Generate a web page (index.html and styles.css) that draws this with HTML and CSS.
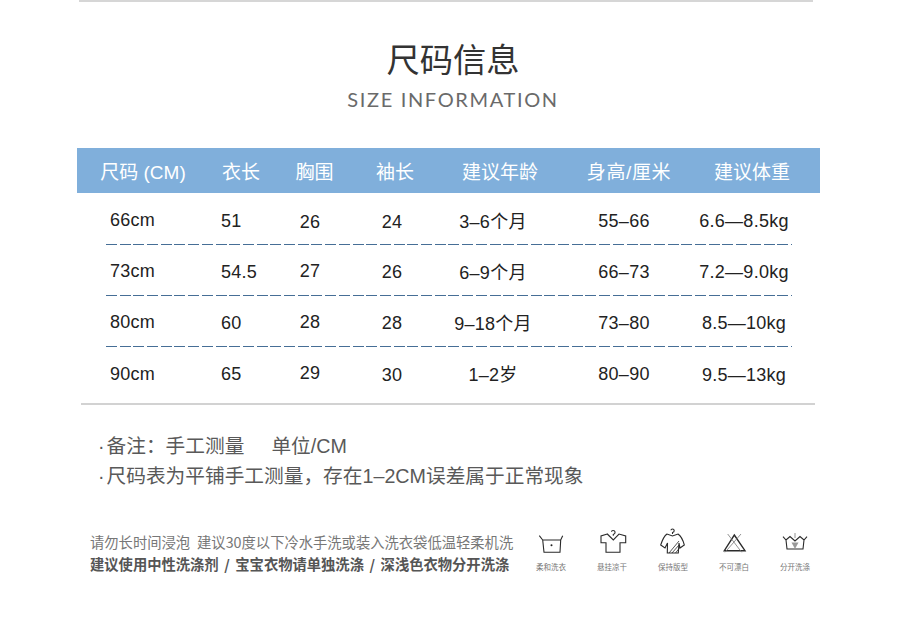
FILE: index.html
```html
<!DOCTYPE html>
<html lang="zh">
<head>
<meta charset="utf-8">
<title>尺码信息</title>
<link rel="stylesheet" href="styles.css">
</head>
<body>
<div class="page">
  <div class="top-rule"></div>
  <h1 class="title">尺码信息</h1>
  <p class="subtitle">SIZE INFORMATION</p>

  <div class="head-row">
    <span>尺码 (CM)</span><span>衣长</span><span>胸围</span><span>袖长</span><span>建议年龄</span><span class="wide">身高/厘米</span><span>建议体重</span>
  </div>

  <div class="rows">
    <div class="row">
      <span class="c1">66cm</span><span class="c2 d1">51</span><span class="d2">26</span><span class="d2">24</span><span>3–6个月</span><span class="d1">55–66</span><span class="d1">6.6—8.5kg</span>
    </div>
    <div class="row">
      <span class="c1">73cm</span><span class="c2 d1">54.5</span><span>27</span><span class="d1">26</span><span>6–9个月</span><span class="d1">66–73</span><span class="d1">7.2—9.0kg</span>
    </div>
    <div class="row">
      <span class="c1">80cm</span><span class="c2 d1">60</span><span>28</span><span class="d1">28</span><span>9–18个月</span><span class="d1">73–80</span><span class="d1">8.5—10kg</span>
    </div>
    <div class="row last">
      <span class="c1">90cm</span><span class="c2">65</span><span class="u1">29</span><span class="d1">30</span><span class="u1">1–2岁</span><span>80–90</span><span class="d1">9.5—13kg</span>
    </div>
  </div>
  <div class="bottom-rule"></div>

  <div class="notes">
    <p><span class="dot">·</span>备注：手工测量<span class="note-gap"></span>单位/CM</p>
    <p><span class="dot">·</span>尺码表为平铺手工测量，存在1–2CM误差属于正常现象</p>
  </div>

  <div class="care">
    <div class="care-text">
      <p class="care-light">请勿长时间浸泡<span class="care-gap"></span>建议30度以下冷水手洗或装入洗衣袋低温轻柔机洗</p>
      <p class="care-bold">建议使用中性洗涤剂 / 宝宝衣物请单独洗涤 / 深浅色衣物分开洗涤</p>
    </div>
    <div class="care-icons">
      <figure class="care-item">
        <svg viewBox="0 0 30 28" width="30" height="28" class="ico"><path d="M3.300 8.700 6.700 13H24.700L26.700 8.700M6.700 13 8 25.300H24L24.700 13"/><circle cx="15.500" cy="18.300" r="1" class="pip"/></svg>
        <figcaption>柔和洗衣</figcaption>
      </figure>
      <figure class="care-item">
        <svg viewBox="0 0 30 28" width="30" height="28" class="ico"><path d="M10.300 7 4 9V15.700H9V25.300H23V15.700H28.700V9L22 7 16.300 13ZM16.300 8.700V7.500C19 6.500 18.500 3.500 16 3.500 15 3.500 14.500 4 14.500 4.800"/></svg>
        <figcaption>悬挂凉干</figcaption>
      </figure>
      <figure class="care-item">
        <svg viewBox="0 0 30 28" width="30" height="28" class="ico"><path d="M9 7C6 9 4 14 2.700 18L7 21 9.500 16 9.300 26H20.300L21 16 22 21 26.300 18C25 13 23 9 20 7L14.500 9ZM14.500 7V5.500C17 5 16.500 2 14.500 2 13.500 2 13 2.600 13 3.200"/><path d="M11 26 21 14M14 26 21 18M17.500 26 21 21.500" class="hatch"/></svg>
        <figcaption>保持版型</figcaption>
      </figure>
      <figure class="care-item">
        <svg viewBox="0 0 30 28" width="30" height="28" class="ico"><path d="M15.300 8 26 23.700H5.300Z" class="bold"/><path d="M8.700 7 22.700 25.300M22 7 6 25.300" class="thin"/></svg>
        <figcaption>不可漂白</figcaption>
      </figure>
      <figure class="care-item">
        <svg viewBox="0 0 30 28" width="30" height="28" class="ico"><path d="M3 9.700 6 13 10 9.500 15 14 20 9.500 24 13 27 9.700M6 13 7 22H23L24 13"/><path d="M11.500 15.500H18.500L15.500 21H14.500Z" class="fill"/><path d="M15 6V11" class="thin"/></svg>
        <figcaption>分开洗涤</figcaption>
      </figure>
    </div>
  </div>
</div>
</body>
</html>
```

FILE: styles.css
```css
* { box-sizing: border-box; }
html, body { margin: 0; padding: 0; background: #fff; }
body { font-family: "Noto Sans CJK SC", "Liberation Sans", sans-serif; }
p, h1, figure { margin: 0; }

.page { width: 900px; height: 626px; overflow: hidden; }

.top-rule { height: 2px; margin: 0 87px 0 79px; background: #d6d6d6; }

.title {
  margin-top: 34px;
  padding-left: 6px;
  text-align: center;
  font-size: 33.300px;
  line-height: 44px;
  font-weight: 400;
  color: #333;
}
.subtitle {
  margin-top: 7px;
  padding-left: 6px;
  text-align: center;
  font-family: "Lato", "Liberation Sans", sans-serif;
  font-size: 20px;
  line-height: 24px;
  letter-spacing: 1.650px;
  color: #6a6a6a;
}

.head-row {
  display: grid;
  grid-template-columns: 132px 64px 83px 78px 132px 126px 120px;
  align-items: center;
  width: 743px;
  height: 45px;
  margin: 37px 0 0 77px;
  background: #80afdb;
  color: #fff;
  font-family: "Liberation Sans", "Noto Sans CJK SC", sans-serif;
  font-size: 19px;
  text-align: center;
}
.wide { letter-spacing: .6px; }

.rows { margin-left: 106px; width: 686px; }
.row {
  display: grid;
  grid-template-columns: 56px 108px 80px 84px 118px 144px 96px;
  align-items: center;
  height: 51px;
  padding-top: 1px;
  font-family: "Liberation Sans", "Noto Sans CJK SC", sans-serif;
  font-size: 18px;
  letter-spacing: .25px;
  color: #222;
  text-align: center;
  white-space: nowrap;
  background-image: repeating-linear-gradient(90deg, #466e96 0 11px, transparent 11px 13.700px);
  background-size: 100% 1px;
  background-repeat: no-repeat;
  background-position: 0 100%;
}
.row:first-child { height: 52px; padding-top: 2px; }
.row.last { background-image: none; padding-top: 3px; }
.row span { display: block; }
.c1 { text-align: left; padding-left: 4px; }
.c2 { text-align: left; padding-left: 59px; }
.d1 { padding-top: 2px; }
.d2 { padding-top: 4px; }
.u1 { padding-bottom: 2px; }

.bottom-rule { height: 2px; margin: 5px 85px 0 81px; background: #d2d2d2; }

.notes {
  margin: 26px 0 0 98px;
  font-family: "Liberation Sans", "Noto Sans CJK SC", sans-serif;
  font-size: 19.700px;
  line-height: 30px;
  color: #595959;
}
.dot { margin-right: 2px; }
.note-gap { display: inline-block; width: 27px; }

.care {
  display: flex;
  margin: 40px 0 0 90px;
}
.care-text { width: 435px; font-size: 14.300px; line-height: 22px; color: #777; white-space: nowrap; }
.care-gap { display: inline-block; width: 7px; }
.care-bold { font-weight: 700; color: #555; word-spacing: 2.300px; }
.care-icons { display: flex; margin: -4px 0 0 -4.500px; }
.care-item { width: 61px; display: flex; flex-direction: column; align-items: center; }
figcaption { margin-top: 7px; font-size: 7.500px; line-height: 10px; color: #777; white-space: nowrap; }
.ico { fill: none; stroke: #2a2a2a; stroke-width: 1.100; }
.ico .pip { fill: #222; stroke: none; }
.ico .hatch { stroke-width: .8; }
.ico .fill { fill: #999; stroke: none; }
.ico .thin { stroke: #777; stroke-width: .8; }
.ico .bold { stroke-width: 1.400; }
```
